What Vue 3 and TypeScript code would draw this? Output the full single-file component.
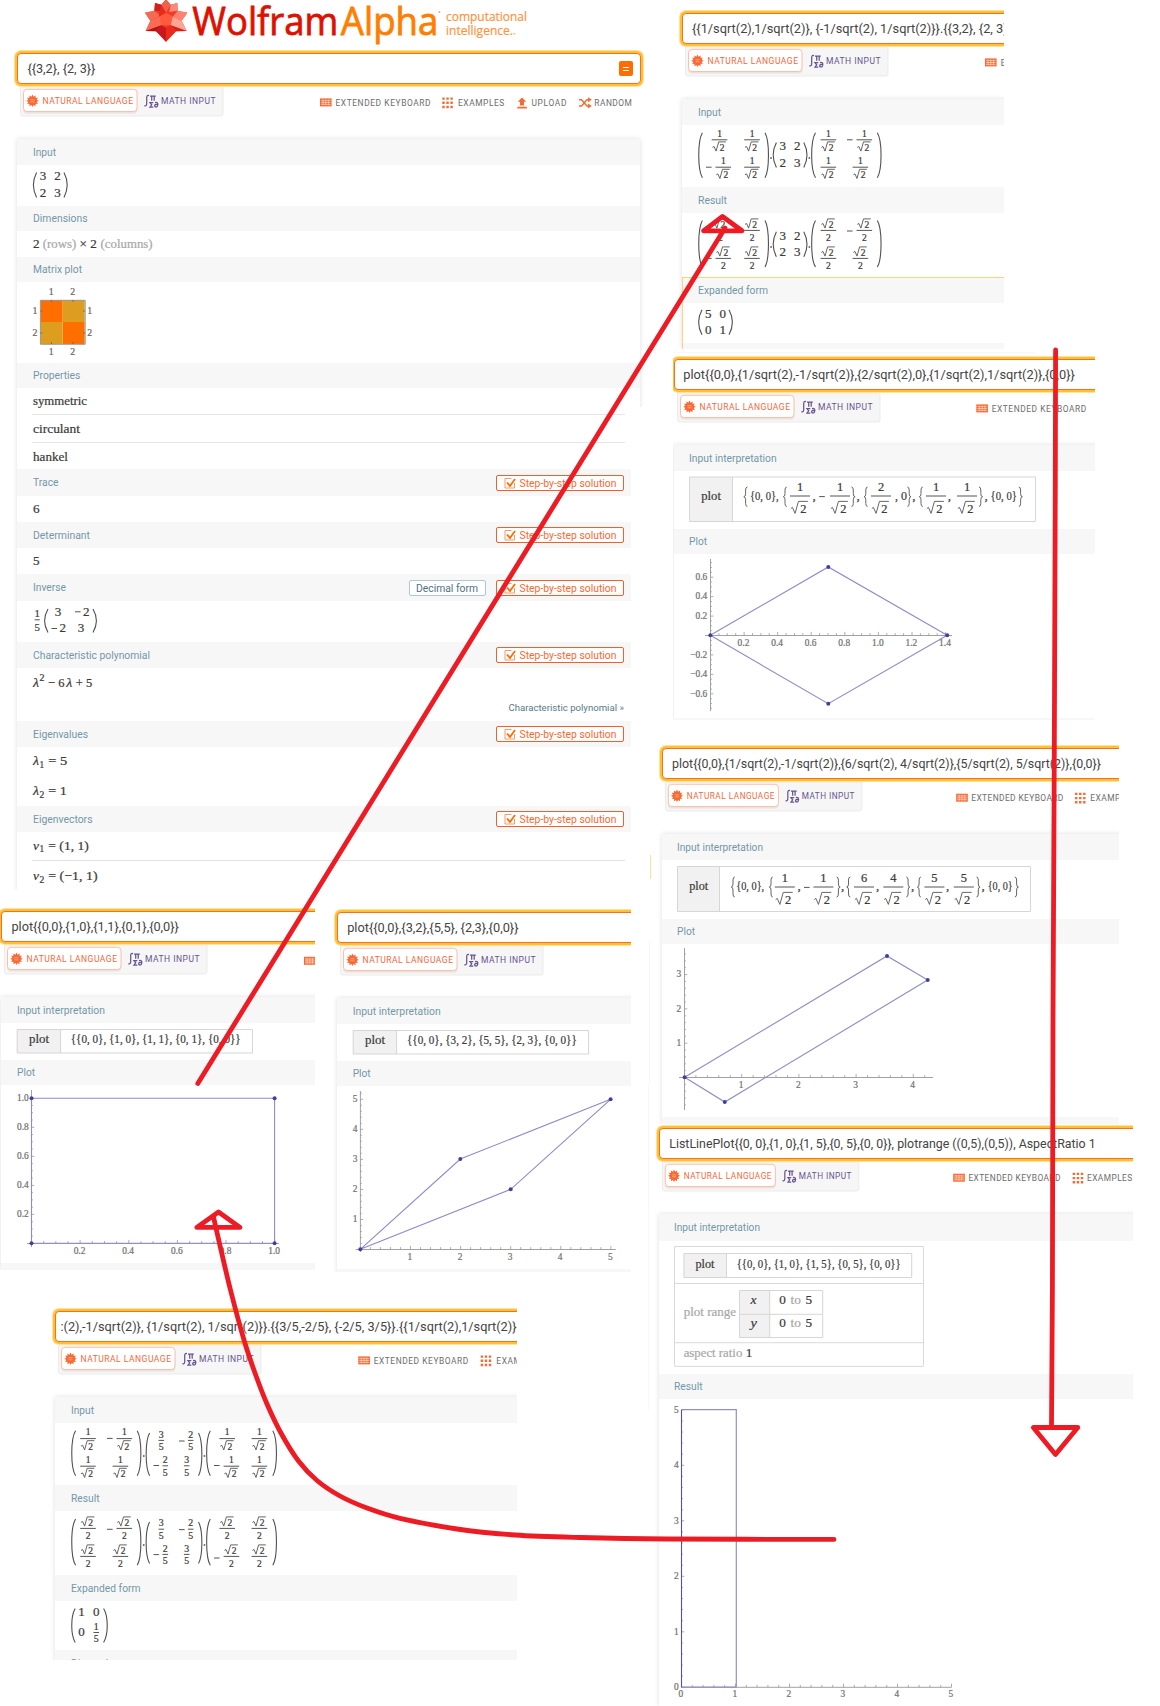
<script setup lang="ts">
interface Prim { k: 't' | 'p'; t?: string; d?: string; x?: number; y?: number; s?: number; l?: number; a?: string; f: string; c?: string; w?: number; i?: boolean }
interface Pod { title: string; tl: number; hh: number; bh: number; prims: Prim[]; btn?: string; dec?: boolean; cls?: string; w?: number }
interface PlacedPod extends Pod { top: number }
interface Panel {
  x: number; y: number; w: number; h: number; bx: number; bw: number; k: number
  q: string; qx: number; ql: number; tx: number; tools: Prim[]; pods: PlacedPod[]; cw: number; eq?: boolean
}

const INK = '#3a3a3a'
const GREY = '#a8a8a8'

/** Left-aligned serif text fitted to a given length. */
const T = (t: string, x: number, y: number, l?: number, s = 13.2, f = INK, i = false): Prim =>
  ({ k: 't', t, x, y, l, s, f, a: 'start', c: 'math', i })
/** Centred serif text. */
const C = (t: string, x: number, y: number, s = 13, f = INK): Prim => ({ k: 't', t, x, y, s, f, a: 'middle', c: 'math' })
const R = (t: string, x: number, y: number, s = 13, f = INK): Prim => ({ k: 't', t, x, y, s, f, a: 'end', c: 'math' })
const U = (t: string, x: number, y: number, l: number, s: number, f: string, c = 'ui'): Prim => ({ k: 't', t, x, y, l, s, f, a: 'start', c })
const L = (d: string, c = INK, w = 1, f = 'none'): Prim => ({ k: 'p', d, c, w, f })

const open = (x0: number, x1: number, y0: number, y1: number): Prim => {
  const c = x1 - (x1 - x0) * 1.28
  return L(`M${x1},${y0}C${c},${y0 + 8} ${c},${y1 - 8} ${x1},${y1}`, '#505050', 1.1)
}
const minus = (x: number, y: number, w = 5.6): Prim => L(`M${x},${y}h${w}`, '#555', 1)
const root = (cx: number, y: number, s = 9.5): Prim[] => {
  const k = s / 9.5
  return [
    L(`M${cx - 7 * k},${y - 3.4 * k}l1.6,${-0.9 * k}l${2 * k},${4.6 * k}l${2.6 * k},${-9.2 * k}h${7.2 * k}`, '#555', 0.9),
    C('2', cx + 2.6 * k, y, s),
  ]
}
const frac = (cx: number, y: number, n: string, d: string, hw = 7.8, s = 9.5, up = 3.2, down = 11): Prim[] => [
  ...(n === 'r' ? root(cx, y - up + 0.6, s) : [C(n, cx, y - up, s)]),
  L(`M${cx - hw},${y}h${hw * 2}`, '#555', 1),
  ...(d === 'r' ? root(cx, y + down, s) : [C(d, cx, y + down, s)]),
]
const inv = (cx: number, y: number) => frac(cx, y, '1', 'r')
const half = (cx: number, y: number) => frac(cx, y, 'r', '2')
const small = (cx: number, y: number, n: string, d: string) => frac(cx, y, n, d, 2.8, 9.8, 2.8, 9.9)
const dot = (x: number, y: number): Prim => L(`M${x - 0.7},${y}h1.5`, '#444', 1.5)
const brace = (x: number, y0: number, y1: number, dir: number): Prim => {
  const m = (y0 + y1) / 2
  const a = dir > 0 ? x + 3.6 : x
  const p = 1.8 * dir
  return L(`M${a},${y0}q${-p},0 ${-p},3V${m - 3}q0,3 ${-p},3q${p},0 ${p},3V${y1 - 3}q0,3 ${p},3`, '#666', 1)
}
const pt = (x: number, y: number): Prim => L(`M${x - 2},${y}a2,2 0 1 0 4,0a2,2 0 1 0 -4,0z`, 'none', 0, '#40409a')

const matrix3223 = (x: number, y: number): Prim[] => [
  open(x, x + 3.2, y, y + 25), C('3', x + 9.6, y + 7.8), C('2', x + 24, y + 7.8), C('2', x + 9.6, y + 24.2), C('3', x + 24, y + 24.2),
  open(x + 33.8, x + 30.6, y, y + 25),
]

function axes(o: {
  ox: number; oy: number; ux: number; uy: number; x0: number; x1: number; y0: number; y1: number
  xl: string[]; yl: string[]; mx: number; my: number; nx: [number, number]; ny: [number, number]; lx: number; ly: number; every: number
}): Prim[] {
  const out: Prim[] = [L(`M${o.x0},${o.oy}H${o.x1}M${o.ox},${o.y0}V${o.y1}`, '#a2a2a2', 1)]
  let d = ''
  for (let i = o.nx[0]; i <= o.nx[1]; i++) d += `M${(o.ox + i * o.mx * o.ux).toFixed(1)},${o.oy}v${i % o.every ? -2.4 : -3.6}`
  for (let i = o.ny[0]; i <= o.ny[1]; i++) d += `M${o.ox},${(o.oy - i * o.my * o.uy).toFixed(1)}h${i % o.every ? 1.4 : 2.8}`
  out.push(L(d, '#999', 0.8))
  for (const v of o.xl) out.push(C(v, o.ox + +v * o.ux - 0.6, o.ly, 9.4, '#707070'))
  for (const v of o.yl) out.push(R(v.replace('-', '−'), o.lx, o.oy - +v * o.uy + 2.7, 9.4, '#707070'))
  return out
}
const poly = (pts: number[][], dots = true): Prim[] => [
  L('M' + pts.map((p) => p.join(',')).join('L') + 'Z', '#8c8ac8', 1.1),
  ...(dots ? pts.map((p) => pt(p[0], p[1])) : []),
]

const box = (x0: number, y0: number, x1: number, y1: number, div: number): Prim[] => [
  L(`M${x0},${y0}H${div}V${y1}H${x0}z`, 'none', 0, '#f1f1f1'),
  L(`M${x0},${y0}H${x1}V${y1}H${x0}zM${div},${y0}V${y1}`, '#d6d6d6', 1),
]

/* toolbar glyphs */
const kb = (x: number, y: number, w = 11.6): Prim[] => [
  L(`M${x},${y}h${w}v8h${-w}z`, 'none', 0, '#f96932'),
  L(`M${x + 1},${y + 2.2}h${w - 2}M${x + 1},${y + 4.1}h${w - 2}M${x + 1},${y + 6}h${w - 2}M${x + w * 0.26},${y + 1}v6M${x + w * 0.5},${y + 1}v6M${x + w * 0.74},${y + 1}v6`, '#ffd9ca', 0.7),
]
const grid = (x: number, y: number, w = 10.5): Prim[] => {
  let d = ''
  for (let r = 0; r < 3; r++) for (let c = 0; c < 3; c++) d += `M${x + c * (w - 2.4) / 2},${y + r * 4.2}h2.4v2.4h-2.4z`
  return [L(d, 'none', 0, '#f96932')]
}
const TG = '#6d6d6d'
const ext = (x: number, tx: number, l: number, y: number): Prim[] => [...kb(x, y - 7.6), U('EXTENDED KEYBOARD', tx, y, l, 8.4, TG)]
const exa = (x: number, tx: number, l: number, y: number, t = 'EXAMPLES', w = 10.5): Prim[] => [...grid(x, y - 8.6, w), U(t, tx, y, l, 8.4, TG)]

const spikes = (cx: number, cy: number, n: number, r0: number, r1: number): string => {
  let d = ''
  for (let i = 0; i < n * 2; i++) {
    const r = i % 2 ? r0 : r1
    const a = (i * Math.PI) / n - Math.PI / 2
    d += `${i ? 'L' : 'M'}${(cx + r * Math.cos(a)).toFixed(2)},${(cy + r * Math.sin(a)).toFixed(2)}`
  }
  return d + 'z'
}
const gear = spikes(13, 14.5, 12, 4.3, 6.2)

const place = (top: number, pods: Pod[]): PlacedPod[] => {
  let y = top
  return pods.map((p) => { const r = { ...p, top: y + p.hh }; y += p.hh + p.bh; return r })
}
const pod = (title: string, tl: number, hh: number, bh: number, prims: Prim[], extra: Partial<Pod> = {}): Pod => ({ title, tl, hh, bh, prims, ...extra })
const S = { btn: 'Step-by-step solution', w: 614 }

const mplot: Prim[] = [
  L('M40.4,300h22.3v22h-22.3zM62.7,322h22v22h-22z', 'none', 0, '#ff6f00'),
  L('M62.7,300h22v22h-22zM40.4,322h22.3v22h-22.3z', 'none', 0, '#dd9e20'),
  L('M40.4,300.3H85.2V344.3H40.4z', '#999', 1),
  L('M51.5,300v2M73,300v2M51.5,344v-2M73,344v-2M40.4,311h2M40.4,333h2M85,311h-2M85,333h-2', '#666', 0.8),
  C('1', 51.3, 295, 9.8, '#666'), C('2', 72.8, 295, 9.8, '#666'), C('1', 51.3, 355, 9.8, '#666'), C('2', 72.8, 355, 9.8, '#666'),
  C('1', 35, 314, 9.8, '#666'), C('2', 35, 335.5, 9.8, '#666'), C('1', 89.6, 314, 9.8, '#666'), C('2', 89.6, 335.5, 9.8, '#666'),
]

const panels: Panel[] = [
  {
    x: 12, y: 50, w: 634, h: 840, bx: 17, bw: 624, k: 1, q: '{{3,2}, {2, 3}}', qx: 27.4, ql: 68, tx: 33, cw: 623, eq: true,
    tools: [
      ...ext(320, 335.5, 95, 106), ...exa(442.3, 458, 46.3, 106),
      L('M522,97.5l4.2,4.3h-2.2v3.6h-4v-3.6h-2.2zM517.3,106.8h9.6v1.6h-9.6z', 'none', 0, '#f96932'), U('UPLOAD', 531.5, 106, 35, 8.4, TG),
      L('M579,99.8h2.5l5.5,6.2h3M579,106h2.5l5.5,-6.2h3', '#f96932', 1.4), L('M588,97.3l3.8,2.5l-3.8,2.5zM588,103.5l3.8,2.5l-3.8,2.5z', 'none', 0, '#f96932'),
      U('RANDOM', 594.3, 106, 37.6, 8.4, TG),
    ],
    pods: place(139, [
      pod('Input', 23, 26, 41, matrix3223(33.4, 172.4)),
      pod('Dimensions', 54.5, 25, 26, [T('2', 33, 247.8, 6.6), T('(rows)', 42.7, 247.8, 33.5, 13.2, GREY), T('× 2', 79.5, 247.8, 17.3), T('(columns)', 100.6, 247.8, 52, 13.2, GREY)]),
      pod('Matrix plot', 49, 25, 81, mplot),
      pod('Properties', 47.4, 25, 81, [T('symmetric', 33, 404.8, 54), T('circulant', 33, 432.8, 47), T('hankel', 33, 460.5, 35), L('M32,414.5H625M32,442.5H625', '#e6e6e6', 1)]),
      pod('Trace', 25.6, 27, 26, [T('6', 33, 513)], S),
      pod('Determinant', 57, 26, 26, [T('5', 33, 565)], S),
      pod('Inverse', 33, 27, 41, [
        ...frac(37.2, 619.8, '1', '5', 2.6, 10.8, 2.6, 10.8), open(44.4, 48, 609, 632.5), C('3', 58, 615.8), minus(75, 611.8), C('2', 86.2, 615.8),
        minus(51.5, 628.5), C('2', 62.8, 632), C('3', 81, 632), open(96.6, 93, 609, 632.5),
      ], { ...S, dec: true }),
      pod('Characteristic polynomial', 117, 26, 53, [
        T('λ', 33, 687.3, 6, 13.2, INK, true), T('2', 39.4, 680.5, 5, 9.8), T('− 6', 48, 687.3, 16.5), T('λ', 66.3, 687.3, 6, 13.2, INK, true), T('+ 5', 75.8, 687.3, 16.5),
        U('Characteristic polynomial »', 508.4, 711, 115.5, 9.6, '#587889'),
      ], S),
      pod('Eigenvalues', 55, 26, 59, [
        T('λ', 33, 765, 6, 13.2, INK, true), T('1', 39.6, 767.8, 4.6, 9.8), T('= 5', 48.3, 765, 19),
        T('λ', 33, 794.6, 6, 13.2, INK, true), T('2', 39.6, 797.6, 4.8, 9.8), T('= 1', 48.3, 794.6, 18.6),
      ], S),
      pod('Eigenvectors', 59.5, 26, 58, [
        T('v', 33, 849.5, 6, 13.2, INK, true), T('1', 39.6, 852.4, 4.6, 9.8), T('= (1, 1)', 48.3, 849.5, 40.5), L('M32,860.5H625', '#e2e2e2', 1),
        T('v', 33, 879.6, 6, 13.2, INK, true), T('2', 39.6, 882.5, 4.8, 9.8), T('= (−1, 1)', 48.3, 879.6, 49.3),
      ], S),
    ]),
  },
  {
    x: 677, y: 10, w: 327, h: 339, bx: 682, bw: 400, k: 1, q: '{{1/sqrt(2),1/sqrt(2)}, {-1/sqrt(2), 1/sqrt(2)}}.{{3,2}, {2, 3}', qx: 692, ql: 315.5, tx: 698, cw: 400,
    tools: ext(985, 1000.7, 95, 66),
    pods: place(99, [
      pod('Input', 23, 26, 62, [
        open(698.6, 702.4, 132.7, 177.7), ...inv(719.5, 139.8), ...inv(752, 139.8), minus(706, 167.2), ...inv(723.3, 167.2), ...inv(752, 167.2), open(768.6, 765, 132.7, 177.7),
        dot(771, 158), ...matrix3223(773.2, 142.5), dot(809.3, 158),
        open(811.5, 815.5, 132.7, 177.7), ...inv(828.4, 139.8), minus(847, 139.8), ...inv(864.3, 139.8), ...inv(828.4, 167.2), ...inv(860.4, 167.2), open(881.2, 877.3, 132.7, 177.7),
      ]),
      pod('Result', 29, 26, 64, [
        open(698.6, 702.4, 220.5, 267), ...half(720.3, 230.4), ...half(752, 230.4), minus(706, 258.4), ...half(723.3, 258.4), ...half(752, 258.4), open(768.6, 765, 220.5, 267),
        dot(771, 247), ...matrix3223(773.2, 231.8), dot(809.3, 247),
        open(811.5, 815.5, 220.5, 267), ...half(828.4, 230.4), minus(847, 231), ...half(864.3, 230.4), ...half(828.4, 258.4), ...half(860.4, 258.4), open(881.2, 877.3, 220.5, 267),
      ]),
      pod('Expanded form', 70, 26, 40, [open(698.6, 702, 309.7, 334.7), C('5', 708.3, 317.5), C('0', 722.7, 317.5), C('0', 708.3, 333.9), C('1', 722.7, 333.9), open(732.4, 729, 309.7, 334.7)], { cls: 'hot' }),
      pod('', 0, 6, 0, [], { cls: 'hot2' }),
    ]),
  },
  {
    x: 673, y: 356, w: 422, h: 364, bx: 674, bw: 500, k: 1, q: 'plot{{0,0},{1/sqrt(2),-1/sqrt(2)},{2/sqrt(2),0},{1/sqrt(2),1/sqrt(2)},{0,0}}', qx: 683.3, ql: 391.5, tx: 689, cw: 500,
    tools: ext(976.3, 991.7, 94.5, 412),
    pods: place(445, [
      pod('Input interpretation', 87.7, 26, 58, [
        ...box(689.5, 477, 1035.5, 521.5, 732.5), T('plot', 701.3, 499.8, 19.6),
        brace(743.8, 487, 506.5, 1), T('{0, 0},', 750, 500, 28.7), brace(783.2, 487, 506.5, 1), ...big(800, 496, '1'), T(',', 812.6, 500), minus(819.2, 496.6), ...big(840, 496, '1'), brace(851.5, 487, 506.5, -1), T(',', 856.5, 500),
        brace(864, 487, 506.5, 1), ...big(881, 496, '2'), T(', 0', 895, 500, 12), brace(907.4, 487, 506.5, -1), T(',', 912.3, 500),
        brace(919.2, 487, 506.5, 1), ...big(936, 496, '1'), T(',', 947.8, 500), ...big(967, 496, '1'), brace(979, 487, 506.5, -1), T(',', 984.5, 500), T('{0, 0}', 990.5, 500, 26.4), brace(1018.8, 487, 506.5, -1),
      ]),
      pod('Plot', 18, 25, 164, [
        ...axes({ ox: 710.5, oy: 635.5, ux: 167.9, uy: 97.2, x0: 705, x1: 952, y0: 559, y1: 711, xl: ['0.2', '0.4', '0.6', '0.8', '1.0', '1.2', '1.4'], yl: ['0.6', '0.4', '0.2', '-0.2', '-0.4', '-0.6'], mx: 0.05, my: 0.05, nx: [1, 28], ny: [-15, 15], lx: 707.3, ly: 645.8, every: 4 }),
        ...poly([[710.3, 635.3], [828.3, 566.9], [947.2, 635.3], [828.3, 703.7]]),
      ]),
      pod('', 0, 2, 0, []),
    ]),
  },
  {
    x: 657, y: 745, w: 462, h: 379, bx: 662, bw: 540, k: 0.97, q: 'plot{{0,0},{1/sqrt(2),-1/sqrt(2)},{6/sqrt(2), 4/sqrt(2)},{5/sqrt(2), 5/sqrt(2)},{0,0}}', qx: 672, ql: 429, tx: 677, cw: 540,
    tools: [...ext(956.2, 971.3, 92, 801.3), ...exa(1075, 1090.3, 45.6, 801.3)],
    pods: place(834, [
      pod('Input interpretation', 86, 26, 59, [
        ...box(677.5, 866.5, 1030.5, 911.5, 719.5), T('plot', 689.2, 890.3, 19),
        brace(731.2, 877, 897, 1), T('{0, 0},', 736.2, 890.4, 28), brace(769.2, 877, 897, 1), ...big(784.8, 887, '1'), T(',', 797.5, 890.4), minus(804, 887.4), ...big(823.4, 887, '1'), brace(836.6, 877, 897, -1), T(',', 841, 890.4),
        brace(846.7, 877, 897, 1), ...big(864, 887, '6'), T(',', 876, 890.4), ...big(893.3, 887, '4'), brace(906.3, 877, 897, -1), T(',', 911, 890.4),
        brace(917.3, 877, 897, 1), ...big(934.4, 887, '5'), T(',', 946, 890.4), ...big(963.8, 887, '5'), brace(976.5, 877, 897, -1), T(',', 981.6, 890.4), T('{0, 0}', 987.7, 890.4, 25), brace(1014.8, 877, 897, -1),
      ]),
      pod('Plot', 18, 25, 173, [
        ...axes({ ox: 684.5, oy: 1077.5, ux: 57.2, uy: 34.3, x0: 679, x1: 933, y0: 948, y1: 1110, xl: ['1', '2', '3', '4'], yl: ['3', '2', '1'], mx: 0.2, my: 0.2, nx: [1, 21], ny: [-4, 18], lx: 681.3, ly: 1087.8, every: 5 }),
        ...poly([[684.6, 1077.3], [724.8, 1102], [927.7, 980], [887, 956]]),
      ]),
      pod('', 0, 7, 0, []),
    ]),
  },
  {
    x: 655, y: 1125, w: 478, h: 581, bx: 659, bw: 560, k: 0.97, q: 'ListLinePlot{{0, 0},{1, 0},{1, 5},{0, 5},{0, 0}}, plotrange ((0,5),(0,5)), AspectRatio 1', qx: 669.3, ql: 426.4, tx: 674, cw: 560,
    tools: [...ext(953.2, 968.4, 92, 1181.3), ...exa(1072.7, 1087, 45.2, 1181.3)],
    pods: place(1214, [
      pod('Input interpretation', 86, 27, 133, [
        L('M674.5,1246.5H923.5V1366.3H674.5zM674.5,1283.5H923.5M674.5,1342.7H923.5', '#d9d9d9', 1),
        ...box(683.9, 1253.5, 911.7, 1277.5, 726.5), T('plot', 695.5, 1268.3, 19), T('{{0, 0}, {1, 0}, {1, 5}, {0, 5}, {0, 0}}', 736.7, 1268.3, 164),
        T('plot range', 683.7, 1316.2, 52.3, 13.2, GREY), ...box(739.5, 1290.5, 822.7, 1337.5, 769.7), L('M739.5,1314.3H822.7', '#d6d6d6', 1),
        T('x', 750.4, 1304, 6, 13.2, INK, true), T('y', 750.4, 1327, 6.4, 13.2, INK, true),
        T('0', 779.2, 1304), T('to', 790.6, 1304, 10.4, 13.2, GREY), T('5', 805.5, 1304), T('0', 779.2, 1327.3), T('to', 790.6, 1327.3, 10.4, 13.2, GREY), T('5', 805.5, 1327.3),
        T('aspect ratio', 683.7, 1356.7, 58.6, 13.2, GREY), T('1', 745.8, 1356.7),
      ]),
      pod('Result', 28.5, 25, 307, [
        ...axes({ ox: 681.5, oy: 1687.3, ux: 54, uy: 55.5, x0: 681, x1: 951.5, y0: 1409.5, y1: 1687, xl: ['0', '1', '2', '3', '4', '5'], yl: ['5', '4', '3', '2', '1', '0'], mx: 0.2, my: 0.2, nx: [0, 25], ny: [0, 25], lx: 678.7, ly: 1697.4, every: 5 }),
        L('M681.5,1409.7H736.3V1687.2H681.5', '#9290c8', 1.2), L('M681.5,1409.7V1687.2', '#55548c', 1.1),
      ]),
    ]),
  },
  {
    x: 0, y: 908, w: 315, h: 362, bx: 1, bw: 380, k: 1, q: 'plot{{0,0},{1,0},{1,1},{0,1},{0,0}}', qx: 11.4, ql: 167.5, tx: 17, cw: 380,
    tools: kb(304, 956.8),
    pods: place(997, [
      pod('Input interpretation', 88, 26, 37, [...box(17.2, 1029.5, 252.5, 1053, 60.6), T('plot', 29, 1043.4, 20), T('{{0, 0}, {1, 0}, {1, 1}, {0, 1}, {0, 0}}', 70.7, 1043.4, 170)]),
      pod('Plot', 18, 25, 178, [
        ...axes({ ox: 31.5, oy: 1243.5, ux: 243.2, uy: 145.3, x0: 27, x1: 279, y0: 1090, y1: 1247, xl: ['0.2', '0.4', '0.6', '0.8', '1.0'], yl: ['0.2', '0.4', '0.6', '0.8', '1.0'], mx: 0.05, my: 0.05, nx: [1, 20], ny: [1, 20], lx: 28.8, ly: 1253.8, every: 4 }),
        ...poly([[31.5, 1243.3], [274.6, 1243.3], [274.6, 1098.2], [31.5, 1098.2]]),
      ]),
      pod('', 0, 7, 0, []),
    ]),
  },
  {
    x: 332, y: 909, w: 299, h: 363, bx: 337, bw: 380, k: 1, q: 'plot{{0,0},{3,2},{5,5}, {2,3},{0,0}}', qx: 347.2, ql: 171.3, tx: 352.7, cw: 380,
    tools: [],
    pods: place(998, [
      pod('Input interpretation', 88, 26, 37, [...box(353.2, 1030.5, 588.6, 1054, 396.6), T('plot', 365, 1044.4, 20), T('{{0, 0}, {3, 2}, {5, 5}, {2, 3}, {0, 0}}', 407, 1044.4, 169.8)]),
      pod('Plot', 18, 25, 183, [
        ...axes({ ox: 360.4, oy: 1249.5, ux: 50.1, uy: 30.05, x0: 355.6, x1: 615.7, y0: 1091, y1: 1252, xl: ['1', '2', '3', '4', '5'], yl: ['1', '2', '3', '4', '5'], mx: 0.2, my: 0.2, nx: [1, 25], ny: [1, 26], lx: 357.5, ly: 1260, every: 5 }),
        ...poly([[360.3, 1249.3], [510.7, 1189.3], [610.6, 1099.3], [460.3, 1159]]),
      ]),
      pod('', 0, 4, 0, []),
    ]),
  },
  {
    x: 50, y: 1308, w: 467, h: 352, bx: 55, bw: 540, k: 1, q: ':(2),-1/sqrt(2)}, {1/sqrt(2), 1/sqrt(2)}}.{{3/5,-2/5}, {-2/5, 3/5}}.{{1/sqrt(2),1/sqrt(2)}', qx: 60.5, ql: 456, tx: 71, cw: 540,
    tools: [...ext(358.3, 373.7, 94.5, 1364), ...exa(480.7, 496.3, 46.5, 1364)],
    pods: place(1397, [
      pod('Input', 23, 26, 62, [
        open(71.6, 75.6, 1430.7, 1475.7), ...inv(88, 1438.6), minus(107, 1438.4), ...inv(124.3, 1438.6), ...inv(88, 1466.2), ...inv(120.4, 1466.2), open(141, 137.2, 1430.7, 1475.7), dot(143.7, 1456),
        open(146, 149.6, 1433, 1475.7), ...small(161.3, 1440.4, '3', '5'), minus(179, 1441), ...small(190.7, 1440.4, '2', '5'), minus(153.5, 1465.5), ...small(165.3, 1465.8, '2', '5'), ...small(186.7, 1465.8, '3', '5'), open(202, 198.5, 1433, 1475.7), dot(204.4, 1456),
        open(206.5, 210.3, 1430.7, 1475.7), ...inv(227.2, 1438.6), ...inv(259.4, 1438.6), minus(214, 1465.5), ...inv(231.4, 1466.2), ...inv(259.4, 1466.2), open(276.6, 272.8, 1430.7, 1475.7),
      ]),
      pod('Result', 28.6, 26, 64, [
        open(71.6, 75.6, 1519, 1565.3), ...half(88, 1528.4), minus(107, 1529.3), ...half(124.3, 1528.4), ...half(88, 1556.4), ...half(120.4, 1556.4), open(141, 137.2, 1519, 1565.3), dot(143.7, 1545),
        open(146, 149.6, 1522, 1563.5), ...small(161.3, 1529.2, '3', '5'), minus(179, 1529.6), ...small(190.7, 1529.2, '2', '5'), minus(153.5, 1554.6), ...small(165.3, 1554.4, '2', '5'), ...small(186.7, 1554.4, '3', '5'), open(202, 198.5, 1522, 1563.5), dot(204.4, 1545),
        open(206.5, 210.3, 1519, 1565.3), ...half(227.2, 1528.4), ...half(259.4, 1528.4), minus(214, 1558), ...half(231.4, 1556.4), ...half(259.4, 1556.4), open(276.6, 272.8, 1519, 1565.3),
      ]),
      pod('Expanded form', 69.5, 26, 49, [open(71.6, 75.2, 1608.5, 1642.5), C('1', 81.4, 1616), C('0', 96.3, 1616), C('0', 81.4, 1636), ...small(96.3, 1632.5, '1', '5'), open(107.4, 103.6, 1608.5, 1642.5)]),
      pod('Dimensions', 54, 26, 0, []),
    ]),
  },
]

/** Full-height fraction over √2, used inside the long brace lists. */
function big(cx: number, y: number, n: string): Prim[] {
  return frac(cx, y, n, 'r', 10, 12.4, 5.2, 17)
}

/* hand-drawn arrows */
const knots = [[213.5, 1217], [221, 1250], [231, 1292], [244, 1340], [255, 1373], [267, 1404], [281.5, 1434], [298.5, 1461], [317, 1480.5], [340, 1496], [367, 1508], [400, 1518.3], [457, 1529], [515, 1535], [580, 1537.5], [667, 1539], [834, 1539.4]]
const curve = knots.slice(0, -1).reduce((d, p, i) => {
  const a = knots[i - 1] ?? p
  const n = knots[i + 1]
  const b = knots[i + 2] ?? n
  return d + `C${p[0] + (n[0] - a[0]) / 6},${p[1] + (n[1] - a[1]) / 6} ${n[0] - (b[0] - p[0]) / 6},${n[1] - (b[1] - p[1]) / 6} ${n[0]},${n[1]}`
}, `M${knots[0]}`)
const arrows = [
  'M197.8,1083.5L725,228', 'M703.5,230.8L722.5,216.5L742,230.8Z',
  'M1055.6,350L1055.3,484L1054.3,752L1053,1021L1052.4,1289L1051.5,1427', 'M1033.3,1427.5H1077.8L1055.5,1454.5Z',
  curve, 'M196.8,1227.4H240L218.5,1212Z',
]
const logo = [
  ['108,-2 122,14 142,9 143,32 172,38 155,62 170,93 138,94 108,125 78,94 47,93 61,62 45,38 73,32 75,9 94,14', '#ef3b27'],
  ['108,-2 122,14 108,38 94,14', '#f0604d'], ['142,9 143,32 118,36 122,14', '#fa8a78'], ['75,9 94,14 100,34 73,32', '#d0201c'],
  ['172,38 155,62 128,50 143,32', '#ff8370'], ['45,38 73,32 92,48 61,62', '#f46b55'], ['108,38 130,50 122,76 94,76 86,50', '#ff5a3c'],
  ['108,38 94,14 86,50', '#e42c1c'], ['122,76 128,50 155,62 170,93', '#ffa594'], ['94,76 88,50 61,62 47,93', '#fc6b56'],
  ['47,93 94,76 78,94', '#b41217'], ['170,93 122,76 138,94', '#d92119'], ['108,125 78,94 94,76 108,84', '#c8171d'], ['108,125 138,94 122,76 108,84', '#ea2a1a'],
]
</script>

<template>
  <main class="canvas">
    <svg class="brand" width="400" height="46" viewBox="140 0 400 46">
      <g transform="translate(130 0) scale(.3333)">
        <polygon v-for="(l, i) in logo" :key="i" :points="l[0]" :fill="l[1]" />
      </g>
      <text class="word" x="192.3" y="35" textLength="146" lengthAdjust="spacingAndGlyphs" font-size="39.2" fill="#dd1100" stroke="#dd1100">Wolfram</text>
      <text class="word" x="340.8" y="35" textLength="97.5" lengthAdjust="spacingAndGlyphs" font-size="39.2" fill="#ff7e00" stroke="#ff7e00">Alpha</text>
      <circle cx="439.5" cy="12" r=".9" fill="#ffa04c" />
      <text class="tag" x="446" y="20.8" textLength="81" lengthAdjust="spacingAndGlyphs">computational</text>
      <text class="tag" x="446" y="35" textLength="67" lengthAdjust="spacingAndGlyphs">intelligence.</text>
      <path d="M513,33.8h2.5" stroke="#ffb070" />
    </svg>

    <section v-for="(p, pi) in panels" :key="pi" class="panel" :style="{ left: p.x + 'px', top: p.y + 'px', width: p.w + 'px', height: p.h + 'px' }">
      <div class="search" :style="{ marginLeft: p.bx - p.x + 'px', width: p.bw + 'px' }">
        <svg width="100%" height="29">
          <text class="query" :x="p.qx - p.bx - 1" y="19" :textLength="p.ql" lengthAdjust="spacingAndGlyphs">{{ p.q }}</text>
        </svg>
        <span v-if="p.eq" class="equals"><i></i><i></i></span>
      </div>
      <svg class="toolbar" :width="p.w" height="53" :viewBox="`${p.x} ${p.y + 36} ${p.w} 53`">
        <g :transform="`translate(${p.bx} ${p.y + 36}) scale(${p.k} 1)`">
          <path d="M3.5,1V27.5q0,2.5 2.5,2.5H203.5q2.5,0 2.5,-2.5V1z" fill="#f6f6f6" stroke="#ebebeb" />
          <rect x="6" y="4.5" width="114.500" height="23.200" rx="4" fill="#ece8e6" />
          <rect x="6.500" y="4" width="113.500" height="22.500" rx="4" fill="#e6dcd8" />
          <rect x="6.500" y="3.300" width="113.500" height="22.200" rx="3.500" fill="#fff" stroke="#fcc0a8" />
          <path :d="gear" transform="translate(2.500 .3)" fill="#f96932" />
          <path d="M13.500,13.800h4M13.500,15.800h4" stroke="#fdb79b" stroke-width=".8" />
          <text class="ui" x="25.500" y="18" textLength="90.500" font-size="8.500" fill="#f4683c">NATURAL LANGUAGE</text>
          <path d="M132,9.600q-2.300,-.8 -2.300,1.800v6.400q0,2.600 -2.300,1.800M133,10.200h5.800M134.700,10.200v4.500M137.200,10.200v4.500M136.300,16.600h-3.300l1.700,2.200l-1.700,2.400h3.300M138,16.600q3,-.8 2.800,2.200q-.3,2.200 -1.800,2.200q-1.500,-.2 -1.300,-1.500q.5,-1.500 3,-.8" fill="none" stroke="#66548f" stroke-width="1.250" />
          <text class="ui" x="144" y="18" textLength="54.500" font-size="8.500" fill="#66548f">MATH INPUT</text>
        </g>
        <template v-for="(e, i) in p.tools" :key="i">
          <text v-if="e.k === 't'" :class="e.c" :x="e.x" :y="e.y" :font-size="e.s" :textLength="e.l" :fill="e.f">{{ e.t }}</text>
          <path v-else :d="e.d" :fill="e.f" :stroke="e.c" :stroke-width="e.w" />
        </template>
      </svg>
      <div class="card" :style="{ marginLeft: p.bx - p.x + 'px', width: p.cw + 'px' }">
        <article v-for="(o, oi) in p.pods" :key="oi" :class="['pod', o.cls]">
          <header :style="{ height: o.hh + 'px', width: o.w ? o.w + 'px' : '100%' }">
            <svg v-if="o.title" width="180" :height="o.hh" class="title">
              <text class="head" :x="p.tx - p.bx" :y="o.hh / 2 + 3.900" :textLength="o.tl" lengthAdjust="spacingAndGlyphs">{{ o.title }}</text>
            </svg>
            <span v-if="o.dec" class="chip blue"><svg width="75" height="14"><text class="head" x="6" y="10.500" textLength="62" lengthAdjust="spacingAndGlyphs">Decimal form</text></svg></span>
            <span v-if="o.btn" class="chip">
              <svg width="126" height="14">
                <path d="M14.500,2.500H8v9.500h9.500V7" fill="none" stroke="#f99a66" />
                <path d="M10,6.500l3,3.500l5,-7" fill="none" stroke="#ff6d00" stroke-width="1.800" />
                <text class="step" x="22.500" y="10.500" textLength="97" lengthAdjust="spacingAndGlyphs">{{ o.btn }}</text>
              </svg>
            </span>
          </header>
          <svg v-if="o.bh" class="body" :width="p.cw" :height="o.bh" :viewBox="`${p.bx} ${o.top} ${p.cw} ${o.bh}`">
            <template v-for="(e, i) in o.prims" :key="i">
              <text v-if="e.k === 't'" :class="[e.c, { it: e.i }]" :x="e.x" :y="e.y" :font-size="e.s" :textLength="e.l" lengthAdjust="spacingAndGlyphs" :text-anchor="e.a" :fill="e.f" :stroke="e.f">{{ e.t }}</text>
              <path v-else :d="e.d" :fill="e.f" :stroke="e.c" :stroke-width="e.w" />
            </template>
          </svg>
        </article>
      </div>
    </section>

    <svg class="marks" width="1160" height="1706" viewBox="0 0 1160 1706">
      <path d="M650.500,855v24" stroke="#ffe19a" />
      <path d="M673,352.500H1035M649.500,940v145M648.500,1085v325" stroke="#f7f7f7" fill="none" />
      <path d="M632,407h15v484h-15z" fill="#fff" />
      <path v-for="(a, i) in arrows" :key="i" :d="a" fill="none" stroke="#ed1c24" stroke-width="4.800" stroke-linecap="round" stroke-linejoin="round" />
    </svg>
  </main>
</template>

<style>
body { margin: 0; background: #fff; }
</style>

<style scoped>
.canvas { position: relative; width: 1160px; height: 1706px; overflow: hidden; background: #fff; font-family: Roboto, "Liberation Sans", sans-serif; }
svg { display: block; }
.brand { margin-left: 140px; }
.word { font-family: "Open Sans", "Noto Sans", sans-serif; font-weight: 500; stroke-width: .8px; }
.tag { font-family: "Open Sans", "Noto Sans", sans-serif; font-size: 12.5px; fill: #ff9238; stroke: #ff9238; stroke-width: .15px; }
.panel { position: absolute; overflow: hidden; background: transparent; }
.search { position: relative; box-sizing: border-box; height: 31px; margin-top: 3px; margin-bottom: 2px; border: 1px solid #f4702a; border-radius: 4px; background: #fff; box-shadow: 0 0 0 2px #ffc22e, 0 0 0 3px #ffe2a0; }
.query { font-size: 13px; fill: #444; }
.equals { position: absolute; right: 7px; top: 7px; width: 14px; height: 15px; border-radius: 2px; background: #ff6d00; display: flex; flex-direction: column; align-items: center; justify-content: center; gap: 2px; }
.equals i { width: 6px; height: 1px; background: #fff; }
.toolbar { overflow: hidden; }
.ui { font-family: Roboto, sans-serif; stroke-width: 0; }
.card { box-shadow: 0 0 5px rgba(0, 0, 0, .13); background: #fff; }
.pod header { display: flex; align-items: center; gap: 10px; background: #f7f7f7; padding-right: 7px; box-sizing: border-box; }
.title { flex: none; margin-right: auto; }
.head { font-size: 10px; fill: #7297a9; }
.step { font-size: 10px; fill: #f96932; }
.chip { flex: none; box-sizing: border-box; height: 16px; border: 1px solid #f0602a; border-radius: 2px; background: #fff; }
.chip.blue { border-color: #a9cbd8; width: 77px; }
.chip.blue .head { fill: #4f7285; }
.math { font-family: "Liberation Serif", serif; stroke-width: .22px; }
.it { font-style: italic; }
.hot { box-shadow: inset 1px 1px 0 #ffd37c; }
.hot header { background: transparent linear-gradient(#f7f7f7, #f7f7f7) 1px 1px no-repeat; }
.hot2 header { border-left: 1px solid #ffd37c; }
.marks { position: absolute; left: 0; top: 0; pointer-events: none; }
</style>
